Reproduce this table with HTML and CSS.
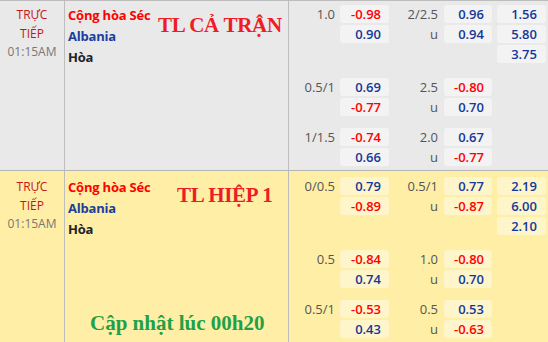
FILE: index.html
```html
<!DOCTYPE html>
<html lang="vi">
<head>
    <meta charset="UTF-8">
    <meta name="viewport" content="width=device-width, initial-scale=1.0">
    <title>Tỷ lệ kèo Cộng hòa Séc - Albania</title>
    <link rel="stylesheet" href="styles.css">
</head>
<body>
    <div class="board">
        <div class="match">
            <div class="time">
                <div class="live">TRỰC</div>
                <div class="live">TIẾP</div>
                <div>01:15AM</div>
            </div>
            <div class="teams">
                <div class="home">Cộng hòa Séc</div>
                <div class="away">Albania</div>
                <div class="draw">Hòa</div>
                <div class="stamp stamp-full">TL CẢ TRẬN</div>
            </div>
            <div class="odds">
                <div class="set main">
                    <div class="line">
                        <span class="hdp">1.0</span><span class="val red">-0.98</span>
                        <span class="hdp">2/2.5</span><span class="val">0.96</span>
                        <span class="val x12">1.56</span>
                    </div>
                    <div class="line">
                        <span class="hdp"></span><span class="val">0.90</span>
                        <span class="hdp">u</span><span class="val">0.94</span>
                        <span class="val x12">5.80</span>
                    </div>
                    <div class="line">
                        <span class="val x12">3.75</span>
                    </div>
                </div>
                <div class="set">
                    <div class="line">
                        <span class="hdp">0.5/1</span><span class="val">0.69</span>
                        <span class="hdp">2.5</span><span class="val red">-0.80</span>
                    </div>
                    <div class="line">
                        <span class="hdp"></span><span class="val red">-0.77</span>
                        <span class="hdp">u</span><span class="val">0.70</span>
                    </div>
                </div>
                <div class="set">
                    <div class="line">
                        <span class="hdp">1/1.5</span><span class="val red">-0.74</span>
                        <span class="hdp">2.0</span><span class="val">0.67</span>
                    </div>
                    <div class="line">
                        <span class="hdp"></span><span class="val">0.66</span>
                        <span class="hdp">u</span><span class="val red">-0.77</span>
                    </div>
                </div>
            </div>
        </div>

        <div class="match half">
            <div class="time">
                <div class="live">TRỰC</div>
                <div class="live">TIẾP</div>
                <div>01:15AM</div>
            </div>
            <div class="teams">
                <div class="home">Cộng hòa Séc</div>
                <div class="away">Albania</div>
                <div class="draw">Hòa</div>
                <div class="stamp stamp-half">TL HIỆP 1</div>
                <div class="stamp stamp-update">Cập nhật lúc 00h20</div>
            </div>
            <div class="odds">
                <div class="set main">
                    <div class="line">
                        <span class="hdp">0/0.5</span><span class="val">0.79</span>
                        <span class="hdp">0.5/1</span><span class="val">0.77</span>
                        <span class="val x12">2.19</span>
                    </div>
                    <div class="line">
                        <span class="hdp"></span><span class="val red">-0.89</span>
                        <span class="hdp">u</span><span class="val red">-0.87</span>
                        <span class="val x12">6.00</span>
                    </div>
                    <div class="line">
                        <span class="val x12">2.10</span>
                    </div>
                </div>
                <div class="set">
                    <div class="line">
                        <span class="hdp">0.5</span><span class="val red">-0.84</span>
                        <span class="hdp">1.0</span><span class="val red">-0.80</span>
                    </div>
                    <div class="line">
                        <span class="hdp"></span><span class="val">0.74</span>
                        <span class="hdp">u</span><span class="val">0.70</span>
                    </div>
                </div>
                <div class="set">
                    <div class="line">
                        <span class="hdp">0.5/1</span><span class="val red">-0.53</span>
                        <span class="hdp">0.5</span><span class="val">0.53</span>
                    </div>
                    <div class="line">
                        <span class="hdp"></span><span class="val">0.43</span>
                        <span class="hdp">u</span><span class="val red">-0.63</span>
                    </div>
                </div>
            </div>
        </div>
    </div>
</body>
</html>
```

FILE: styles.css
```css
body {
    margin: 0;
    font-family: 'Open Sans', 'Noto Sans', sans-serif;
    font-size: 12px;
    color: #333;
    background: #e9e9e9;
}
.board {
    border-top: 1px solid #bdbdbd;
}
.match {
    display: grid;
    grid-template-columns: 65px 224px 1fr;
    height: 169px;
    background: #e9e9e9;
    border-bottom: 1px solid #b5b5b5;
}
.match.half {
    background: #ffeea6;
    height: 180px;
}
.match > div {
    box-sizing: border-box;
    padding-top: 4px;
}
.match.half > div {
    padding-top: 6px;
}
.time {
    border-right: 1px solid #bdbdbd;
    text-align: center;
    color: #777;
    line-height: 18.5px;
}
.match > .time {
    padding-top: 5px;
}
.match.half > .time {
    padding-top: 7px;
}
.live {
    color: #c4161c;
}
.teams {
    position: relative;
    border-right: 1px solid #bdbdbd;
    padding-left: 3px;
    font-size: 13px;
    font-weight: 700;
    line-height: 21px;
    letter-spacing: -0.2px;
}
.home {
    color: #ff0000;
}
.away {
    color: #1b3f9a;
}
.draw {
    color: #222;
}
.stamp {
    position: absolute;
    font-family: 'Liberation Serif', 'Times New Roman', serif;
    font-size: 21px;
    font-weight: 700;
    line-height: 21px;
    letter-spacing: -0.3px;
    white-space: nowrap;
    color: #ee1c25;
}
.stamp-full {
    left: 93px;
    top: 14px;
}
.stamp-half {
    left: 112px;
    top: 14px;
}
.stamp-update {
    left: 25px;
    top: 142px;
    color: #21a047;
    letter-spacing: 0;
}
.odds {
    font-size: 13px;
}
.set {
    display: flex;
    flex-direction: column;
    gap: 2px;
    margin-bottom: 12px;
}
.set.main {
    margin-bottom: 15px;
}
.line {
    display: grid;
    grid-template-columns: 51px 49px 55px 48px 54px;
    height: 18px;
    line-height: 18px;
}
.hdp {
    text-align: right;
    color: #555;
    padding-right: 5px;
}
.hdp + .val + .hdp {
    padding-right: 6px;
}
.val {
    background: #f3f3f3;
    border-radius: 3px;
    text-align: right;
    padding-right: 8px;
    font-weight: 600;
    color: #14389a;
}
.half .val {
    background: #fff5cb;
}
.val.red {
    color: #ff0000;
}
.val.x12 {
    grid-column: 5;
    margin-left: 5px;
    padding-right: 9px;
}
```
